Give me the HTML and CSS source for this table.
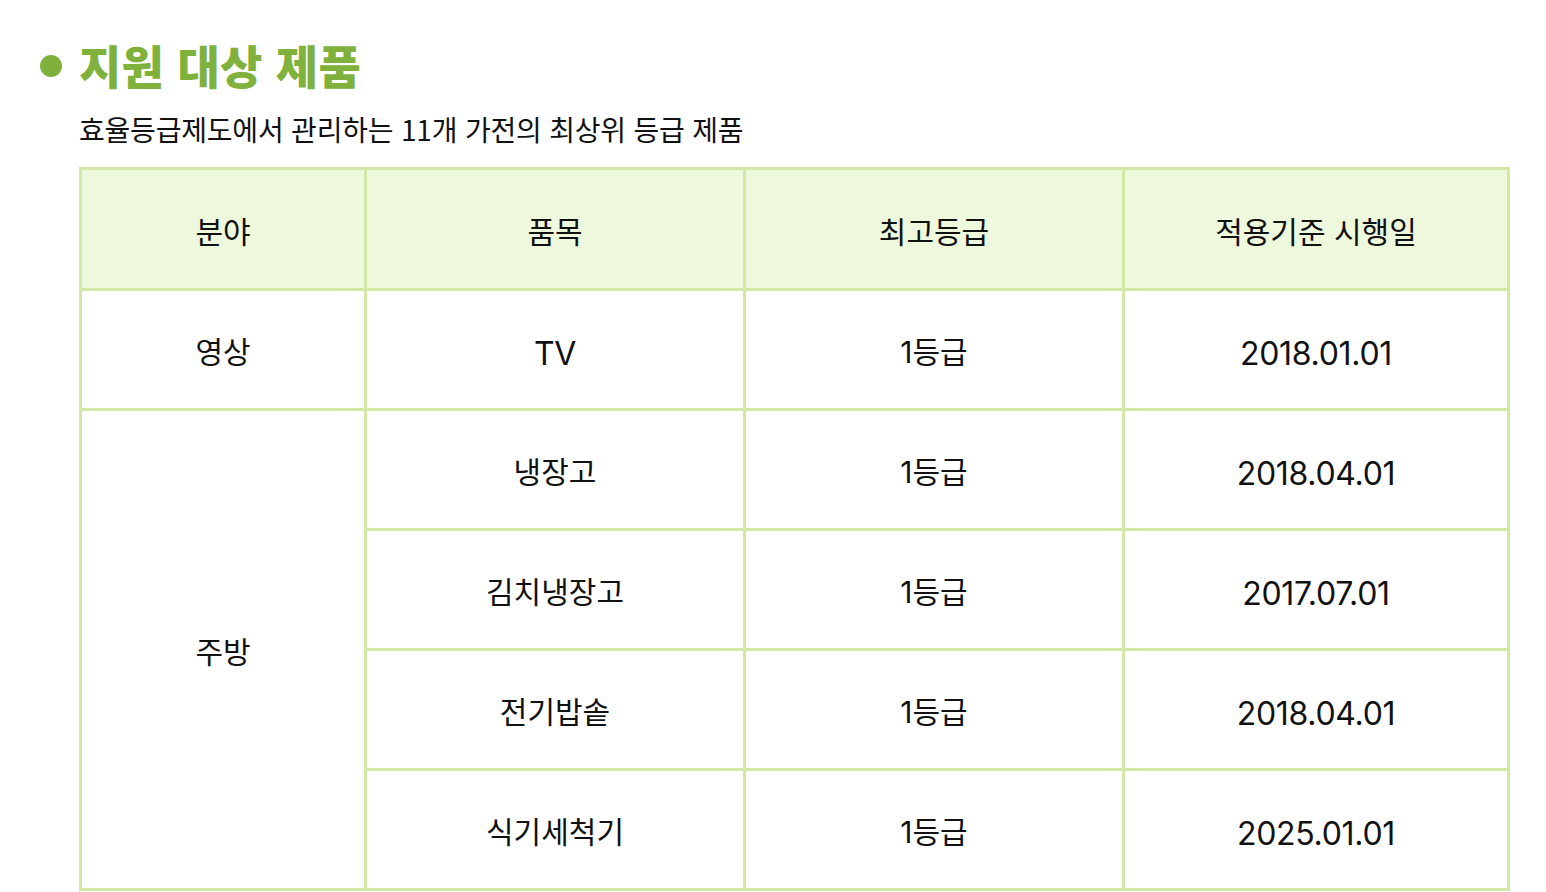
FILE: index.html
```html
<!DOCTYPE html>
<html lang="ko">
<head>
<meta charset="utf-8">
<title>지원 대상 제품</title>
<link rel="stylesheet" href="styles.css">
</head>
<body>
<section class="section">
  <h2 class="section-title"><span class="bullet"></span>지원 대상 제품</h2>
  <p class="section-desc">효율등급제도에서 관리하는 11개 가전의 최상위 등급 제품</p>
  <table class="product-table">
    <colgroup>
      <col class="col-field">
      <col class="col-item">
      <col class="col-grade">
      <col class="col-date">
    </colgroup>
    <thead>
      <tr>
        <th>분야</th>
        <th>품목</th>
        <th>최고등급</th>
        <th>적용기준 시행일</th>
      </tr>
    </thead>
    <tbody>
      <tr>
        <td>영상</td>
        <td class="latin">TV</td>
        <td>1등급</td>
        <td class="latin">2018.01.01</td>
      </tr>
      <tr>
        <td rowspan="5">주방</td>
        <td>냉장고</td>
        <td>1등급</td>
        <td class="latin">2018.04.01</td>
      </tr>
      <tr>
        <td>김치냉장고</td>
        <td>1등급</td>
        <td class="latin">2017.07.01</td>
      </tr>
      <tr>
        <td>전기밥솥</td>
        <td>1등급</td>
        <td class="latin">2018.04.01</td>
      </tr>
      <tr>
        <td>식기세척기</td>
        <td>1등급</td>
        <td class="latin">2025.01.01</td>
      </tr>
    </tbody>
  </table>
</section>
</body>
</html>
```

FILE: styles.css
```css
* { box-sizing: border-box; }

html, body {
  margin: 0;
  padding: 0;
  background: #ffffff;
}

body {
  font-family: Inter, "Noto Sans CJK KR", sans-serif;
  color: #111111;
}

.section {
  padding: 34px 36px 0 40px;
}

.section-title {
  display: flex;
  align-items: center;
  gap: 17px;
  margin: 0;
  font-family: "Noto Sans CJK KR", sans-serif;
  font-weight: 900;
  font-size: 46px;
  line-height: 60px;
  color: #80b13d;
  letter-spacing: 0.3px;
}

.bullet {
  width: 22px;
  height: 22px;
  border-radius: 50%;
  background: #80b13d;
  flex: none;
  margin-top: 4px;
}

.section-desc {
  margin: 19px 0 0 39px;
  font-family: "Noto Sans CJK KR", sans-serif;
  font-size: 28px;
  line-height: 32px;
  color: #111111;
  letter-spacing: -0.2px;
}

.product-table {
  margin: 22px 0 0 39px;
  width: 1431px;
  table-layout: fixed;
  border-collapse: separate;
  border-spacing: 0;
  border-left: 3px solid #d2e8a5;
  border-top: 3px solid #d2e8a5;
}

.col-field { width: 285px; }
.col-item { width: 379px; }
.col-grade { width: 379px; }
.col-date { width: 385px; }

.product-table th,
.product-table td {
  border-right: 3px solid #d2e8a5;
  border-bottom: 3px solid #d2e8a5;
  text-align: center;
  vertical-align: middle;
  padding: 1px 0 0;
  font-size: 30px;
  font-weight: 400;
  color: #111111;
  letter-spacing: 0;
}

.product-table th {
  height: 121px;
  background: #eef8dd;
}

.product-table td {
  height: 120px;
  background: #ffffff;
}

.product-table td.latin {
  padding-top: 7px;
  font-size: 32px;
  letter-spacing: -0.3px;
}
```
